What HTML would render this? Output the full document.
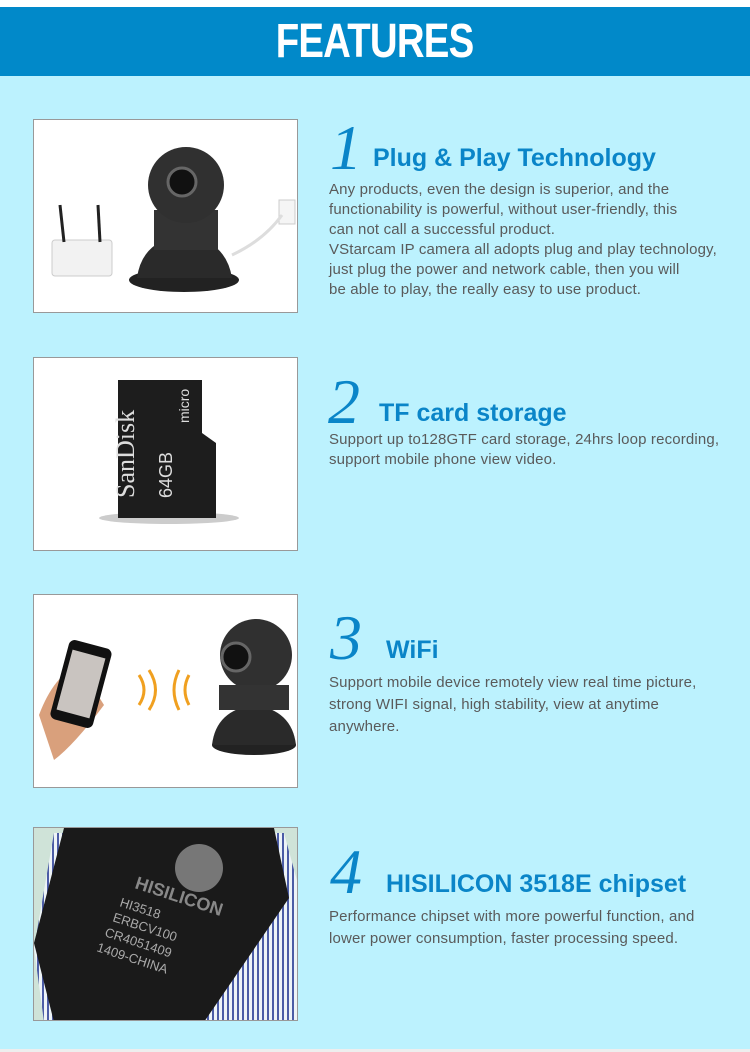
<!DOCTYPE html>
<html><head><meta charset="utf-8"><style>
*{margin:0;padding:0;box-sizing:border-box}
body{width:750px;height:1052px;background:#bcf2fe;position:relative;overflow:hidden;font-family:"Liberation Sans",Arial,sans-serif}
.top{position:absolute;top:0;left:0;width:750px;height:7px;background:#fff}
.hdr{position:absolute;top:7px;left:0;width:750px;height:69px;background:#0189c9;text-align:center}
.hdr span{display:inline-block;color:#fff;font-weight:bold;font-size:48px;line-height:69px;transform:scaleX(0.8);letter-spacing:-1px;font-family:"Liberation Sans Narrow","Liberation Sans",sans-serif}
.box{position:absolute;left:33px;width:265px;height:194px;background:#fff;border:1px solid #999;overflow:hidden}
.num{position:absolute;font-family:"Liberation Serif",serif;font-style:italic;color:#0a85c8;font-size:64px;line-height:1;font-weight:normal}
.ttl{position:absolute;color:#0a85c8;font-weight:bold;font-size:25px;white-space:nowrap}
.txt{position:absolute;left:329px;color:#5a5a5a;font-size:15px;line-height:20px;white-space:nowrap;letter-spacing:0.15px}
.bot{position:absolute;left:0;top:1049px;width:750px;height:3px;background:#eee}
</style></head><body>
<div class="top"></div>
<div class="hdr"><span>FEATURES</span></div>

<div class="box" style="top:119px">
 <svg width="265" height="194">
  <rect x="18" y="120" width="60" height="36" rx="3" fill="#f2f2f2" stroke="#ccc"/>
  <line x1="30" y1="122" x2="26" y2="85" stroke="#222" stroke-width="3"/>
  <line x1="66" y1="122" x2="64" y2="85" stroke="#222" stroke-width="3"/>
  <ellipse cx="150" cy="160" rx="55" ry="12" fill="#222"/>
  <path d="M103 158 Q108 120 150 115 Q192 120 198 158 Z" fill="#2a2a2a"/>
  <rect x="120" y="90" width="64" height="40" fill="#333"/>
  <circle cx="152" cy="65" r="38" fill="#303030"/>
  <circle cx="148" cy="62" r="14" fill="#111" stroke="#666" stroke-width="3"/>
  <rect x="245" y="80" width="16" height="24" fill="#f5f5f5" stroke="#ccc"/>
  <path d="M198 135 Q230 120 248 95" stroke="#ddd" stroke-width="3" fill="none"/>
 </svg>
</div>
<div class="num" style="left:330px;top:116px">1</div>
<div class="ttl" style="left:373px;top:144px">Plug &amp; Play Technology</div>
<div class="txt" style="top:180px">Any products, even the design is superior, and the<br>functionability is powerful, without user-friendly, this<br>can not call a successful product.<br>VStarcam IP camera all adopts plug and play technology,<br>just plug the power and network cable, then you will<br>be able to play, the really easy to use product.</div>

<div class="box" style="top:357px">
 <svg width="265" height="194">
  <ellipse cx="135" cy="160" rx="70" ry="6" fill="#ccc"/>
  <path d="M84 22 L168 22 L168 75 L182 85 L182 160 L84 160 Z" fill="#1d1d1d"/>
  <text transform="translate(100,140) rotate(-90)" fill="#ddd" font-family="Liberation Serif" font-size="26">SanDisk</text>
  <text transform="translate(138,140) rotate(-90)" fill="#ddd" font-family="Liberation Sans" font-size="18">64GB</text>
  <text transform="translate(155,65) rotate(-90)" fill="#ddd" font-family="Liberation Sans" font-size="14">micro</text>
 </svg>
</div>
<div class="num" style="left:328px;top:370px">2</div>
<div class="ttl" style="left:379px;top:399px">TF card storage</div>
<div class="txt" style="top:430px">Support up to128GTF card storage, 24hrs loop recording,<br>support mobile phone view video.</div>

<div class="box" style="top:594px">
 <svg width="265" height="194">
  <path d="M5 120 Q20 80 45 70 L70 110 Q40 150 20 165 Z" fill="#d9a07c"/>
  <rect x="25" y="48" width="44" height="82" rx="6" fill="#111" transform="rotate(15 47 89)"/>
  <rect x="30" y="58" width="34" height="62" fill="#c9c4c0" transform="rotate(15 47 89)"/>
  <path d="M105 80 Q115 95 105 110 M115 75 Q128 95 115 115 M145 75 Q135 95 145 115 M155 80 Q147 95 155 110" stroke="#f0a020" stroke-width="3" fill="none"/>
  <ellipse cx="220" cy="150" rx="42" ry="10" fill="#222"/>
  <path d="M178 150 Q182 115 220 110 Q258 115 262 150 Z" fill="#2a2a2a"/>
  <circle cx="222" cy="60" r="36" fill="#303030"/>
  <circle cx="202" cy="62" r="14" fill="#111" stroke="#666" stroke-width="3"/>
  <rect x="185" y="90" width="70" height="25" fill="#333"/>
 </svg>
</div>
<div class="num" style="left:330px;top:606px">3</div>
<div class="ttl" style="left:386px;top:636px">WiFi</div>
<div class="txt" style="top:672px;line-height:22px">Support mobile device remotely view real time picture,<br>strong WIFI signal, high stability, view at anytime<br>anywhere.</div>

<div class="box" style="top:827px;background:#cfe3d8">
 <svg width="265" height="194">
  <defs><pattern id="p" width="5" height="5" patternUnits="userSpaceOnUse"><rect width="3" height="5" fill="#f5f7ff"/><rect x="3" width="2" height="5" fill="#2a3a9a"/></pattern></defs>
  <polygon points="20,5 250,5 265,60 265,194 10,194 0,120" fill="url(#p)" opacity="0.8"/>
  <polygon points="30,0 240,0 255,70 170,194 20,194 0,115" fill="#1a1a1a"/>
  <circle cx="165" cy="40" r="24" fill="#777"/>
  <text transform="translate(100,60) rotate(18)" fill="#888" font-weight="bold" font-size="18">HISILICON</text>
  <g fill="#aaa" font-size="13">
   <text transform="translate(85,78) rotate(18)">HI3518</text>
   <text transform="translate(78,93) rotate(18)">ERBCV100</text>
   <text transform="translate(70,108) rotate(18)">CR4051409</text>
   <text transform="translate(62,123) rotate(18)">1409-CHINA</text>
  </g>
 </svg>
</div>
<div class="num" style="left:330px;top:840px">4</div>
<div class="ttl" style="left:386px;top:870px">HISILICON 3518E chipset</div>
<div class="txt" style="top:906px;line-height:22px">Performance chipset with more powerful function, and<br>lower power consumption, faster processing speed.</div>
<div class="bot"></div>
</body></html>
